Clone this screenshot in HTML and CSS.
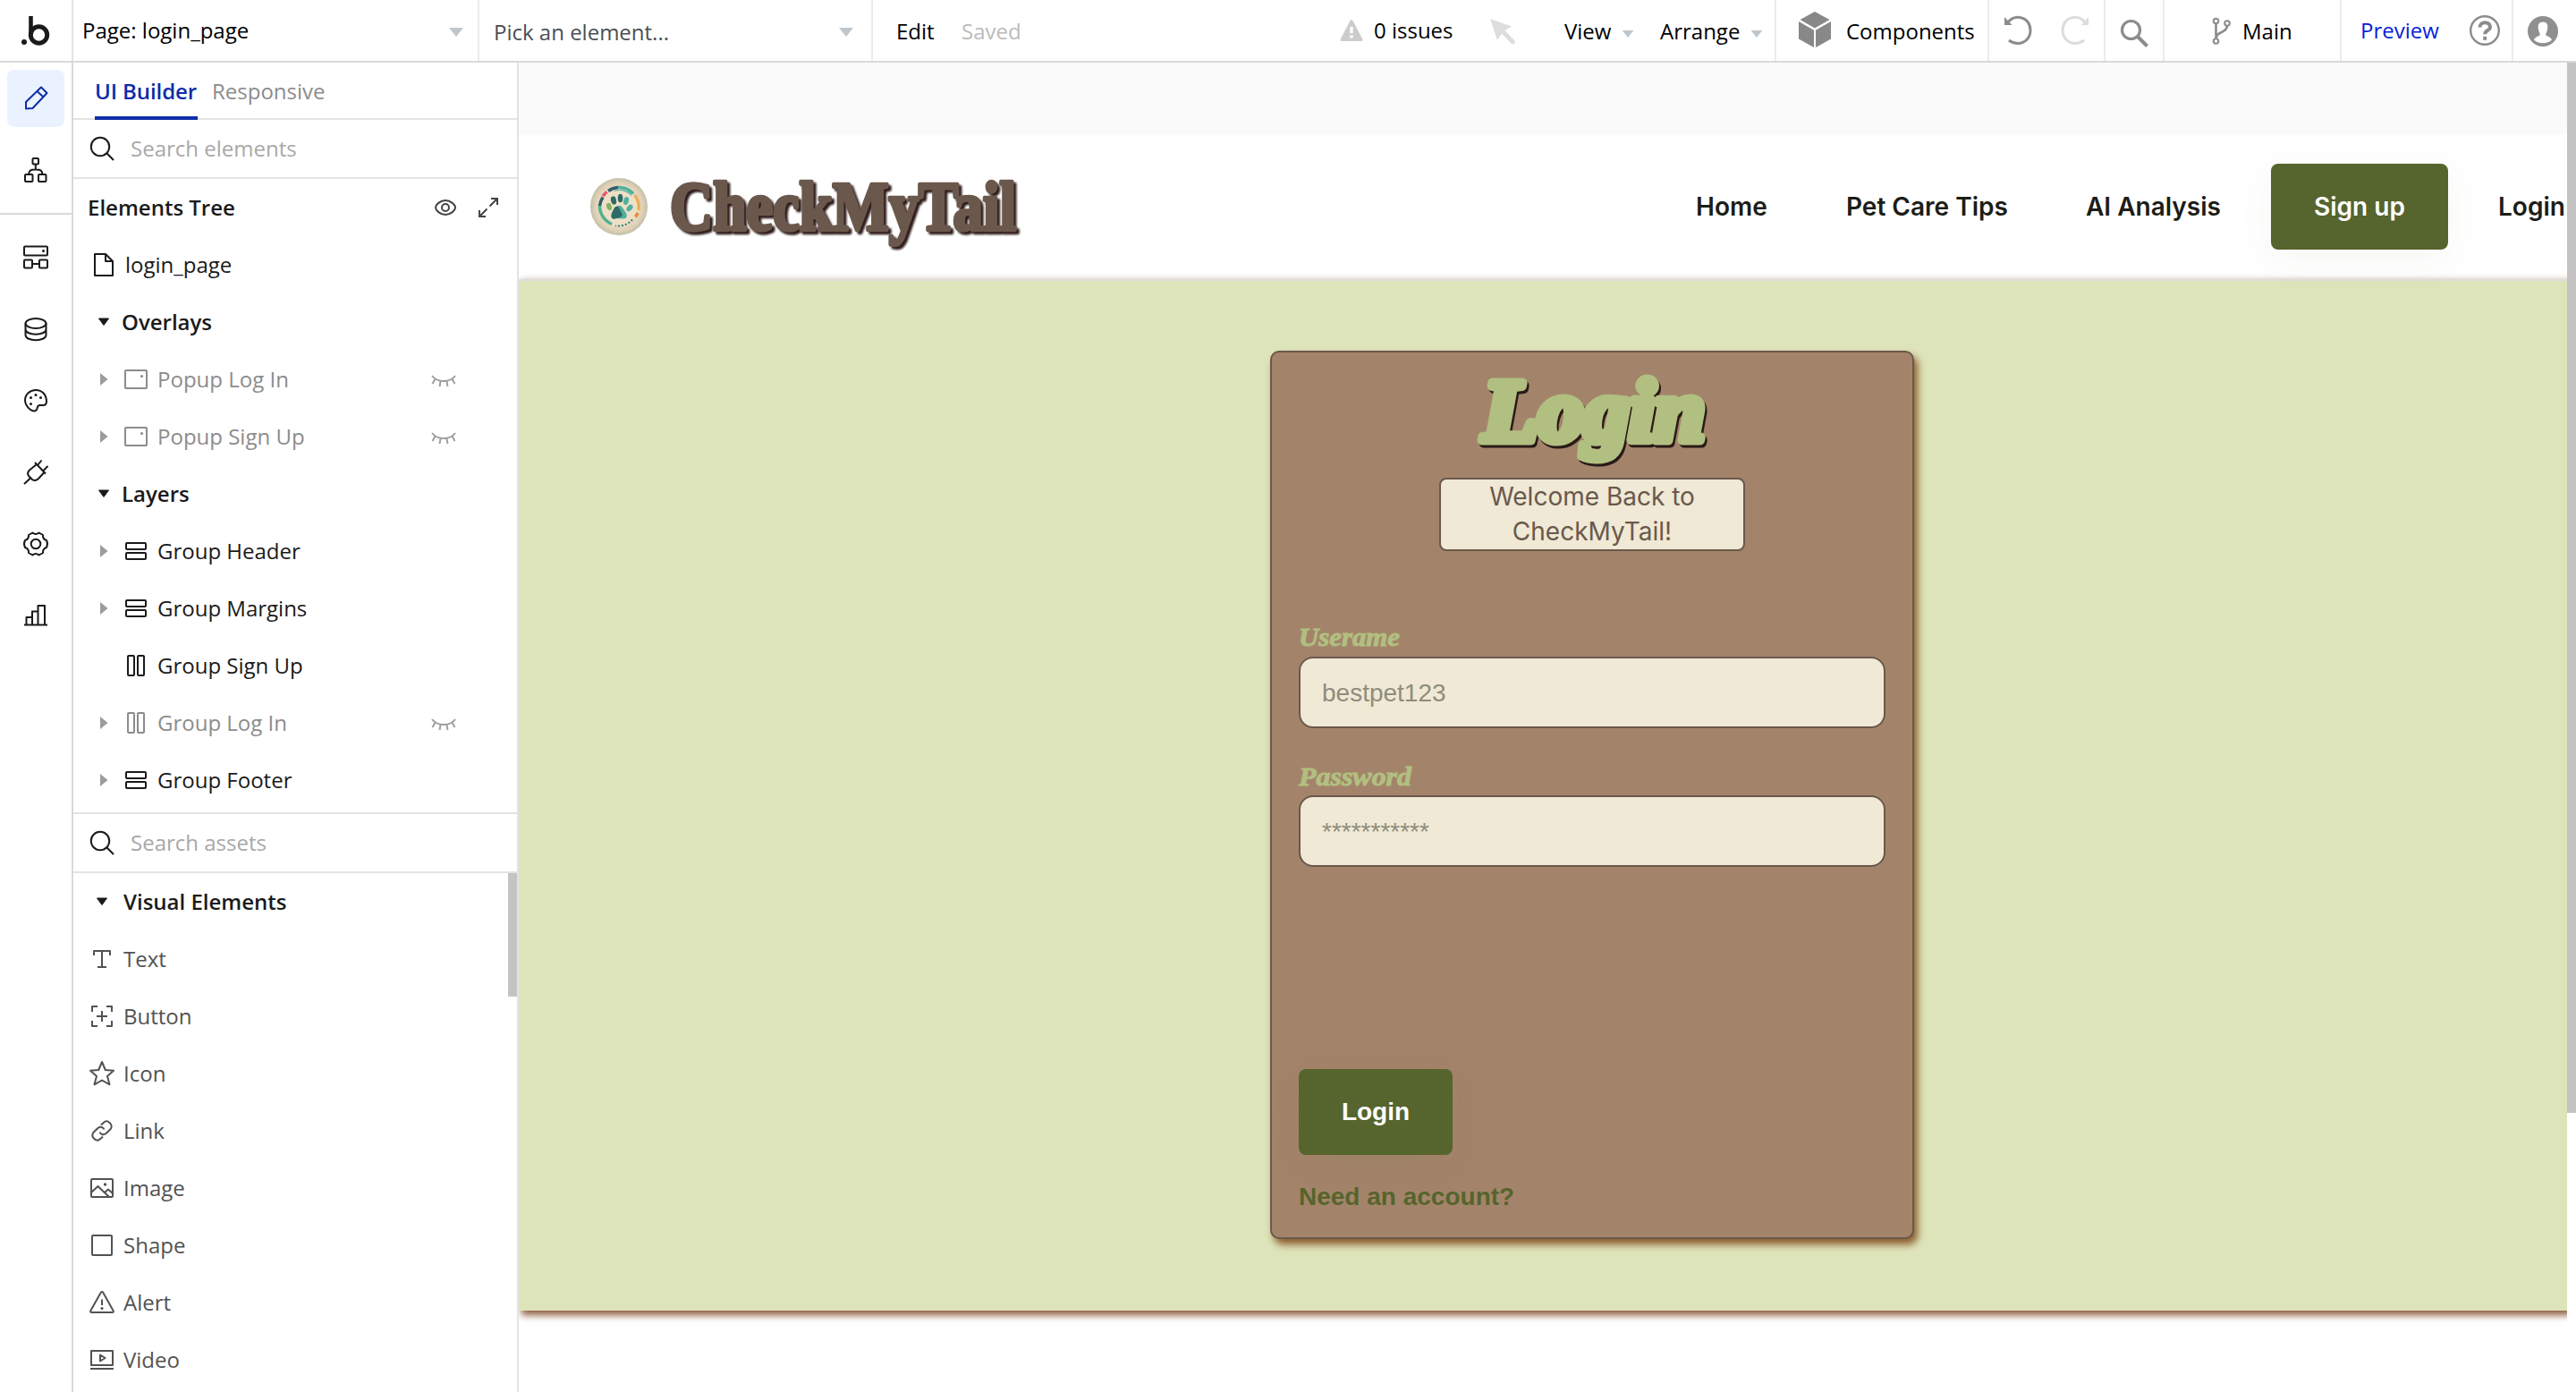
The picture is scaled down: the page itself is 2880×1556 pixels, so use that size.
FILE: index.html
```html
<!DOCTYPE html>
<html lang="en">
<head>
<meta charset="utf-8">
<title>login_page</title>
<link rel="stylesheet" href="styles.css">
</head>
<body>
<svg width="0" height="0" class="defs">
  <defs>
    <symbol id="caret" viewBox="0 0 16 10"><path d="M0 0H16L8 10Z" fill="#bfc7cd"/></symbol>
    <symbol id="search" viewBox="0 0 32 32"><g fill="none" stroke="#1a1a1a" stroke-width="2"><circle cx="14" cy="14" r="10.2"/><path d="M21.3 21.3 29 29"/></g></symbol>
    <symbol id="down" viewBox="0 0 14 10"><path d="M1.5 1H12.5L7 8.500Z" fill="#1a1a1a" stroke="#1a1a1a" stroke-linejoin="round"/></symbol>
    <symbol id="right" viewBox="0 0 10 14"><path d="M1 0V14L9.500 7Z" fill="#9c9c9c"/></symbol>
    <symbol id="popup" viewBox="0 0 32 32"><rect x="4" y="6" width="24" height="20" rx="1" fill="none" stroke="currentColor" stroke-width="2"/><circle cx="22.500" cy="12.500" r="1.600" fill="currentColor"/></symbol>
    <symbol id="rows" viewBox="0 0 32 32"><g fill="none" stroke="currentColor" stroke-width="2"><rect x="5" y="7" width="22" height="7" rx="1"/><rect x="5" y="18" width="22" height="7" rx="1"/></g></symbol>
    <symbol id="cols" viewBox="0 0 32 32"><g fill="none" stroke="currentColor" stroke-width="2"><rect x="7" y="5" width="7" height="22" rx="1"/><rect x="18" y="5" width="7" height="22" rx="1"/></g></symbol>
    <symbol id="hidden" viewBox="0 0 28 16"><path d="M1 2C7 10 21 10 27 2M4.500 5.500 1.500 11M10.500 8.500 9.500 14M17.500 8.500 18.500 14M23.500 5.500 26.500 11" fill="none" stroke="#9c9c9c" stroke-width="1.900"/></symbol>
  </defs>
</svg>

<header class="topbar">
  <div class="seg seg-logo">
    <svg width="34" height="36" viewBox="0 0 34 36"><circle cx="5" cy="31" r="3" fill="#1a1a1a"/><path d="M12.500 2V23" stroke="#1a1a1a" stroke-width="4.600"/><circle cx="21.500" cy="23" r="9.200" fill="none" stroke="#1a1a1a" stroke-width="5"/></svg>
  </div>
  <div class="seg seg-page"><span class="up">Page: login_page</span><svg class="caret"><use href="#caret"/></svg></div>
  <div class="seg seg-pick"><span>Pick an element...</span><svg class="caret"><use href="#caret"/></svg></div>
  <div class="seg seg-menu">
    <span>Edit</span><span class="muted">Saved</span>
    <svg width="28" height="28" viewBox="0 0 28 28"><path d="M14 2.500 25 23.500H3Z" fill="#ccc" stroke="#ccc" stroke-width="3" stroke-linejoin="round"/><path d="M14 9V16M14 18.500V21.500" stroke="#fff" stroke-width="3.400"/></svg>
    <span class="up">0 issues</span>
    <svg width="32" height="32" viewBox="0 0 32 32"><path d="M2 2 26 10.500 18.500 15 28.500 25.500Q31 28.500 28.500 30 26.500 31 24.500 28.500L15 18.500 10 26Z" fill="#ddd"/></svg>
    <span>View</span><svg class="caret small"><use href="#caret"/></svg>
    <span>Arrange</span><svg class="caret small"><use href="#caret"/></svg>
  </div>
  <div class="seg seg-components">
    <svg width="38" height="42" viewBox="0 0 38 42"><g fill="#888"><path d="M19 1 35.500 10 19 19.500 2.500 10Z"/><path d="M1 12 18 21.700V41L1 31.500Z"/><path d="M37 12 20 21.700V41L37 31.500Z"/></g></svg>
    <span>Components</span>
  </div>
  <div class="seg seg-undo">
    <svg width="34" height="36" viewBox="0 0 34 36"><path d="M6 9C10 4 15 3 19 3.500 27 4.500 31 11 31 18 31 26 25 32.500 17 32.500 13 32.500 9.500 31 7 29" fill="none" stroke="#8c8c8c" stroke-width="3"/><path d="M2 3V12H10.500Z" fill="#8c8c8c"/></svg>
    <svg width="34" height="36" viewBox="0 0 34 36"><path d="M28 9C24 4 19 3 15 3.500 7 4.500 3 11 3 18 3 26 9 32.500 17 32.500 21 32.500 24.500 31 27 29" fill="none" stroke="#dcdcdc" stroke-width="3"/><path d="M32 3V12H23.500Z" fill="#dcdcdc"/></svg>
  </div>
  <div class="seg seg-search">
    <svg width="34" height="34" viewBox="0 0 34 34"><circle cx="13.500" cy="13.500" r="10" fill="none" stroke="#8c8c8c" stroke-width="3.200"/><path d="M20.500 20.500 31.500 31.500" stroke="#8c8c8c" stroke-width="4"/></svg>
  </div>
  <div class="seg seg-branch">
    <svg width="22" height="32" viewBox="0 0 22 32"><g fill="none" stroke="#8c8c8c" stroke-width="2"><circle cx="4.500" cy="4.500" r="2.800"/><circle cx="4.500" cy="27" r="2.800"/><circle cx="17" cy="7" r="2.800"/><path d="M4.500 7.500V24M17 10C17 18 5 16 5 23" stroke-width="2.600"/></g></svg>
    <span>Main</span>
  </div>
  <div class="seg seg-preview">
    <span class="preview">Preview</span>
    <svg width="36" height="36" viewBox="0 0 36 36"><circle cx="18" cy="18" r="15.800" fill="none" stroke="#8c8c8c" stroke-width="2.400"/><path d="M12.500 14.500C12.500 7.500 24 7.500 24 14.200 24 18 18.200 18 18.200 22.200" fill="none" stroke="#8c8c8c" stroke-width="4"/><rect x="16.200" y="24.800" width="4" height="4" fill="#8c8c8c"/></svg>
  </div>
  <div class="seg seg-user">
    <svg width="36" height="36" viewBox="0 0 36 36"><circle cx="18" cy="18" r="17" fill="#8f8f8f"/><path d="M18 7.500C22.500 7.500 23.800 11 23.200 15 22.900 18 21.500 19.500 21.200 21.500 21 23.500 26.500 23.500 28 27.500 23 32.500 13 32.500 8 27.500 9.500 23.500 15 23.500 14.800 21.500 14.500 19.500 13.100 18 12.800 15 12.200 11 13.500 7.500 18 7.500Z" fill="#fff"/></svg>
  </div>
</header>

<div class="workspace">
  <nav class="rail">
    <div class="rail-item active"><svg viewBox="0 0 32 32"><path d="M22 3.500 28.500 10 12.500 27 5 27.500V20ZM17.500 8 24.500 14.500" class="line"/></svg></div>
    <div class="rail-item"><svg viewBox="0 0 32 32"><g class="line"><rect x="12.500" y="3" width="6.500" height="6.500" rx="1"/><rect x="4" y="21" width="8.500" height="8" rx="1"/><rect x="19" y="21" width="8.500" height="8" rx="1"/><path d="M15.800 9.500V15M8.300 21C8.300 16.500 10 15.500 15.800 15.500S23.300 16.500 23.300 21"/></g></svg></div>
    <div class="rail-divider"></div>
    <div class="rail-item"><svg viewBox="0 0 32 32"><g class="line"><rect x="3" y="3.500" width="26" height="10" rx="1"/><rect x="3" y="18.500" width="9" height="9" rx="1"/><rect x="20" y="18.500" width="9" height="9" rx="1"/><path d="M12 23H20"/></g><circle cx="24.500" cy="8.500" r="1.500" class="dot"/></svg></div>
    <div class="rail-item"><svg viewBox="0 0 32 32"><g class="line"><ellipse cx="16" cy="9.500" rx="11.500" ry="5.500"/><path d="M4.500 9.500V22.500C4.500 30 27.500 30 27.500 22.500V9.500M4.500 16C4.500 23.500 27.500 23.500 27.500 16"/></g></svg></div>
    <div class="rail-item"><svg viewBox="0 0 32 32"><path d="M16 4C23 4 28 9 28 17 28 20 26.500 21 24 21H20.500C17 21 18.500 24.500 16.500 26.500 14.500 28.500 12 27.500 9.500 25.500 6 22.500 4 19.500 4 15.500 4 9 9.500 4 16 4Z" class="line"/><g class="dot"><circle cx="10.500" cy="12.500" r="1.500"/><circle cx="16" cy="9.500" r="1.500"/><circle cx="21.500" cy="12.500" r="1.500"/><circle cx="10.500" cy="19.500" r="1.500"/></g></svg></div>
    <div class="rail-item"><svg viewBox="0 0 32 32"><path d="M15 5 27 17.500M17 7 9 13.500Q5.500 17 8.500 20.500L12 24Q15.500 26.500 19 23L25.500 16M18.500 7.500 22.500 2.500M24.500 14 29.500 9M10 22.500 3 29" class="line"/></svg></div>
    <div class="rail-item"><svg viewBox="0 0 32 32"><g class="line"><circle cx="16" cy="16" r="5.300"/><path d="M12.500 3.500Q16 6.500 19.500 3.500L24 6Q23.500 10.500 28 12Q30 16 28 20Q23.500 21.500 24 26L19.500 28.500Q16 25.500 12.500 28.500L8 26Q8.500 21.500 4 20Q2 16 4 12Q8.500 10.500 8 6Z"/></g></svg></div>
    <div class="rail-item"><svg viewBox="0 0 32 32"><path d="M3 26.500H29M5.500 26V18H12V26M12 18V11.500H18.500V26M18.500 11.500V5H26V26" class="line"/></svg></div>
  </nav>

  <aside class="panel">
    <div class="tabs"><span class="tab current">UI Builder</span><span class="tab">Responsive</span></div>
    <div class="searchbox"><svg class="ico"><use href="#search"/></svg><span>Search elements</span></div>
    <div class="tree">
      <div class="tree-title"><span class="strong">Elements Tree</span>
        <svg width="28" height="24" viewBox="0 0 28 24"><g fill="none" stroke="#444" stroke-width="2"><path d="M3 12C3 9 8 4 14 4S25 9 25 12 20 20 14 20 3 15 3 12Z"/><circle cx="14" cy="12" r="4"/></g></svg>
        <svg width="24" height="24" viewBox="0 0 24 24"><path d="M13.500 10.500 22 2M15 2H22V9M10.500 13.500 2 22M9 22H2V15" fill="none" stroke="#444" stroke-width="2"/></svg>
      </div>
      <div class="row page"><svg class="ico" viewBox="0 0 32 32"><path d="M6 4H18L26 12V28H6ZM18 4V12H26" fill="none" stroke="#1a1a1a" stroke-width="2" stroke-linejoin="round"/></svg><span>login_page</span></div>
      <div class="row section"><svg class="down"><use href="#down"/></svg><span>Overlays</span></div>
      <div class="row item dim"><svg class="right"><use href="#right"/></svg><svg class="ico"><use href="#popup"/></svg><span>Popup Log In</span><svg class="hid"><use href="#hidden"/></svg></div>
      <div class="row item dim"><svg class="right"><use href="#right"/></svg><svg class="ico"><use href="#popup"/></svg><span>Popup Sign Up</span><svg class="hid"><use href="#hidden"/></svg></div>
      <div class="row section"><svg class="down"><use href="#down"/></svg><span>Layers</span></div>
      <div class="row item"><svg class="right"><use href="#right"/></svg><svg class="ico"><use href="#rows"/></svg><span>Group Header</span></div>
      <div class="row item"><svg class="right"><use href="#right"/></svg><svg class="ico"><use href="#rows"/></svg><span>Group Margins</span></div>
      <div class="row item"><i></i><svg class="ico"><use href="#cols"/></svg><span>Group Sign Up</span></div>
      <div class="row item dim"><svg class="right"><use href="#right"/></svg><svg class="ico"><use href="#cols"/></svg><span>Group Log In</span><svg class="hid"><use href="#hidden"/></svg></div>
      <div class="row item"><svg class="right"><use href="#right"/></svg><svg class="ico"><use href="#rows"/></svg><span>Group Footer</span></div>
    </div>
    <div class="searchbox"><svg class="ico"><use href="#search"/></svg><span>Search assets</span></div>
    <div class="assets">
      <div class="asset-list">
        <div class="row heading"><svg class="down"><use href="#down"/></svg><span>Visual Elements</span></div>
        <div class="row asset"><svg viewBox="0 0 32 32"><path d="M7 12V7H25V12M16 7V25M11 25H21" class="line"/></svg><span>Text</span></div>
        <div class="row asset"><svg viewBox="0 0 32 32"><path d="M5 11V5H11M21 5H27V11M27 21V27H21M11 27H5V21M16 10V22M10 16H22" class="line"/></svg><span>Button</span></div>
        <div class="row asset"><svg viewBox="0 0 32 32"><path d="M16 3 19.800 12 29 12.800 22 19 24.500 28.300 16 23.500 7.500 28.300 10 19 3 12.800 12.200 12Z" class="line"/></svg><span>Icon</span></div>
        <div class="row asset"><svg viewBox="0 0 32 32"><path d="M15 9.500 18 6.700C22 3 29 8.500 25.700 14L20.500 19C17.500 21.300 14.500 20 13.500 17.500M17 22.500 14 25.300C10 29 3 23.500 6.300 18L11.500 13C14.500 10.700 17.500 12 18.500 14.500" class="line"/></svg><span>Link</span></div>
        <div class="row asset"><svg viewBox="0 0 32 32"><rect x="4" y="6" width="24" height="20" rx="1" class="line"/><path d="M4 21 11.500 14 24 26M19 21 23 17.500 28 22" class="line"/><circle cx="19.500" cy="12" r="1.700" class="dot"/></svg><span>Image</span></div>
        <div class="row asset"><svg viewBox="0 0 32 32"><rect x="5" y="5" width="22" height="22" rx="1" class="line"/></svg><span>Shape</span></div>
        <div class="row asset"><svg viewBox="0 0 32 32"><path d="M14.800 4.800Q16 3 17.200 4.800L28.600 25Q29.500 27 27.500 27H4.500Q2.500 27 3.400 25ZM16 12.500V19" class="line"/><circle cx="16" cy="22.500" r="1.600" class="dot"/></svg><span>Alert</span></div>
        <div class="row asset"><svg viewBox="0 0 32 32"><path d="M4 6H28V22H4ZM3 26H29M14 10.500V17.500L19.500 14Z" class="line"/></svg><span>Video</span></div>
      </div>
      <div class="asset-thumb"></div>
    </div>
  </aside>

  <main class="canvas">
    <div class="site">
      <div class="site-top"></div>
      <div class="site-header">
        <svg class="badge" viewBox="0 0 64 64">
          <defs><radialGradient id="cream"><stop offset=".6" stop-color="#eee0c6"/><stop offset=".85" stop-color="#ddd0b6"/><stop offset="1" stop-color="#c3bfa8"/></radialGradient></defs>
          <circle cx="32" cy="32" r="32" fill="url(#cream)"/>
          <g fill="none" stroke-width="3.500">
            <path d="M31 10.500A22 22 0 0 1 48 17.500" stroke="#4fb0a0"/><path d="M20 14.500A22 22 0 0 1 31 10.500" stroke="#355e68"/>
            <path d="M14 20.500A22 22 0 0 1 18.500 15.500" stroke="#e8596f"/><path d="M10.500 31A22 22 0 0 1 14 21.500" stroke="#355e68"/>
            <path d="M10.500 31A22 22 0 0 0 24 51.500" stroke="#52b08f"/><path d="M49.500 19A22 22 0 0 1 54 36" stroke="#ecb057"/><path d="M53 39A22 22 0 0 1 50.500 43.500" stroke="#e78b3f"/>
            <path d="M47 46.500A22 22 0 0 1 28 53.500" stroke="#347f72" stroke-width="2" stroke-dasharray="2 2"/>
            <path d="M27 14.500C34 12 42 14.500 46 19.500" stroke="#4fb0a0" stroke-width="1.200"/>
          </g>
          <ellipse cx="26" cy="25" rx="3" ry="4.700" fill="#2d6b66" transform="rotate(-12 26 25)"/><ellipse cx="33.500" cy="22.500" rx="2.800" ry="4.700" fill="#2d6b66"/><ellipse cx="40" cy="25.500" rx="2.900" ry="4.500" fill="#4fb0a0" transform="rotate(15 40 25.500)"/><ellipse cx="44" cy="33.500" rx="2.800" ry="4.300" fill="#4fb0a0" transform="rotate(40 44 33.500)"/><ellipse cx="21" cy="32" rx="2.800" ry="4.200" fill="#82b064" transform="rotate(-20 21 32)"/>
          <path d="M29 32Q33 29 36 33L40.500 40Q42 45 37 45.500L27 45Q22.500 43 24.500 39Z" fill="#4fb0a0"/><path d="M27 33Q30.500 30 32.500 34L36 41Q35.500 44 31 44.500L26 46Q22 44.500 24 39Z" fill="#2d6b66"/>
        </svg>
        <svg class="wordmark" width="420" height="130" viewBox="0 0 420 130"><text x="11" y="91" textLength="387" lengthAdjust="spacingAndGlyphs">CheckMyTail</text></svg>
        <nav class="site-nav"><span>Home</span><span>Pet Care Tips</span><span>AI Analysis</span><a class="btn signup">Sign up</a><span class="last">Login</span></nav>
      </div>
      <section class="hero">
        <form class="card">
          <svg class="title" width="340" height="136" viewBox="0 0 340 136"><text x="48" y="94" textLength="248" lengthAdjust="spacingAndGlyphs">Login</text></svg>
          <p class="welcome">Welcome Back to<br>CheckMyTail!</p>
          <label class="label first"><svg width="140" height="44" viewBox="0 0 140 44"><text x="0" y="32" textLength="113" lengthAdjust="spacingAndGlyphs">Userame</text></svg></label>
          <input class="field" placeholder="bestpet123">
          <label class="label second"><svg width="140" height="43" viewBox="0 0 140 43"><text x="0" y="32" textLength="126" lengthAdjust="spacingAndGlyphs">Password</text></svg></label>
          <input class="field" placeholder="***********">
          <a class="btn login">Login</a>
          <a class="need">Need an account?</a>
        </form>
      </section>
    </div>
    <div class="scroll"><div class="thumb"></div></div>
  </main>
</div>
</body>
</html>
```
FILE: styles.css
```css
* { box-sizing: border-box; }
html, body { margin: 0; height: 100%; overflow: hidden; }
body {
  display: flex;
  flex-direction: column;
  background: #fff;
  color: #1a1a1a;
  font: 24px/32px "Open Sans", "Noto Sans", sans-serif;
  white-space: nowrap;
}
svg { display: block; flex: none; overflow: visible; }
.defs { position: absolute; }
.line { fill: none; stroke: currentColor; stroke-width: 2; stroke-linejoin: round; }
.dot { fill: currentColor; }

/* Top bar */
.topbar { display: flex; flex: none; height: 70px; border-bottom: 2px solid #d9d9d9; color: #000; }
.seg { display: flex; flex: none; align-items: center; border-right: 2px solid #ebebeb; padding-top: 2px; }
.up { margin-top: -2px; }
.caret { width: 16px; height: 10px; }
.caret.small { width: 14px; height: 8px; margin-top: 5px; }
.seg-logo { width: 82px; padding: 0 0 0 22px; border-color: #dfe4ea; }
.seg-page { width: 454px; padding: 1px 16px 0 10px; justify-content: space-between; }
.seg-page .caret { margin-top: 3px; }
.seg-pick { width: 440px; padding: 4px 20px 0 16px; justify-content: space-between; color: #4a4f54; }
.seg-menu { width: 1010px; display: grid; grid-template-columns: 74px 422px 39px 128px 85px 64px 43px 101px 20px; padding-left: 25px; }
.seg-menu > :first-child { margin-left: 1px; }
.muted { color: #bbb; }
.seg-components { width: 238px; padding-left: 24px; gap: 16px; }
.seg-components svg { margin-top: -4px; }
.seg-undo { width: 130px; padding: 0 0 0 15px; gap: 30px; }
.seg-search { width: 66px; padding: 5px 0 0 15px; }
.seg-branch { width: 198px; padding-left: 53px; gap: 12px; }
.seg-preview { width: 192px; padding: 0 0 0 21px; }
.preview { width: 121px; color: #0a1fd6; }
.seg-user { border: 0; padding: 1px 0 0 15px; }

.workspace { display: flex; flex: 1; min-height: 0; }

/* Icon rail */
.rail { width: 82px; flex: none; border-right: 2px solid #d9d9d9; display: flex; flex-direction: column; gap: 16px; padding-top: 8px; }
.rail-item { width: 64px; height: 64px; margin-left: 8px; flex: none; display: grid; place-items: center; border-radius: 8px; }
.rail-item svg { width: 32px; height: 32px; }
.active { background: #ebf2ff; color: #0f2da8; }
.rail-divider { height: 2px; background: #d9d9d9; flex: none; }

/* Side panel */
.panel { width: 498px; flex: none; border-right: 2px solid #e3e3e3; display: flex; flex-direction: column; }
.ico { width: 32px; height: 32px; }
.tabs { height: 64px; flex: none; display: flex; gap: 16px; padding-left: 24px; border-bottom: 2px solid #e3e3e3; }
.tab { height: 64px; line-height: 64px; color: #8c8c8c; }
.current { width: 115px; color: #0f2da8; font-weight: 600; letter-spacing: -.1px; border-bottom: 4px solid #0f2da8; }
.searchbox { height: 66px; flex: none; display: flex; align-items: center; gap: 16px; padding-left: 16px; border-bottom: 2px solid #e3e3e3; color: #a8a8a8; }
.tree { height: 710px; flex: none; border-bottom: 2px solid #e3e3e3; }
.tree-title, .row { display: flex; align-items: center; height: 64px; }
.tree-title { padding-left: 16px; }
.strong { width: 386px; font-weight: 600; }
.tree-title svg + svg { margin-left: 22px; }
.page { padding-left: 18px; gap: 8px; }
.section { padding-left: 27px; gap: 13px; font-weight: 600; }
.down { width: 14px; height: 10px; }
.item { padding-left: 29px; }
.item .right, .item i { width: 10px; height: 14px; margin-right: 15px; }
.item span { margin-left: 8px; flex: 1; }
.hid { width: 28px; height: 16px; margin-right: 68px; margin-top: 4px; }
.dim { color: #8c8c8c; }
.heading { padding-left: 25px; gap: 17px; font-weight: 600; }
.assets { flex: 1; display: flex; min-height: 0; overflow: hidden; }
.asset-list { flex: 1; }
.asset { color: #525252; padding-left: 16px; gap: 8px; }
.asset svg { width: 32px; height: 32px; }
.asset-thumb { width: 10px; height: 138px; background: #c4c4c4; }

/* Page being edited */
.canvas { flex: 1; display: flex; min-width: 0; }
.site { width: 2290px; overflow: hidden; font-family: Inter, sans-serif; }
.site-top { height: 80px; background: #fafafa; }
.site-header { height: 162px; display: flex; align-items: center; padding-left: 80px; background: #fff; }
.badge { width: 64px; height: 64px; }
.wordmark { margin-left: 14px; }
.wordmark text {
  font: bold 78px "Liberation Serif", serif;
  fill: #6b584c;
  stroke: #6b584c;
  stroke-width: 4.5;
  stroke-linejoin: round;
  filter: drop-shadow(3px 3px 1px #2f1c1c);
}
.site-nav { margin-left: 738px; display: grid; grid-template-columns: 168px 268px 207px 198px 78px; align-items: center; font-size: 28px; font-weight: 600; color: #1c1d17; }
.site-nav span { margin-top: -1px; }
.site-nav .last { padding-left: 56px; }
.btn { display: flex; align-items: center; justify-content: center; height: 96px; border-radius: 8px; background: #56642d; color: #fff; box-shadow: 0 10px 40px rgba(86, 100, 45, .06); }
.signup { padding-bottom: 1px; }
.hero { height: 1153px; background: #dee4ba; border-top: 2px solid #dedede; padding: 78px 0 0 840px; box-shadow: 4px 4px 8px 1px #8b5a3b; }
.card { width: 720px; height: 993px; padding: 0 30px; display: flex; flex-direction: column; background: #a3846a; border: 2px solid #6b584c; border-radius: 10px; box-shadow: 4px 6px 8px #8a5a2c; }
.title { align-self: center; margin-top: 4px; }
.title text {
  font: italic bold 97px "Liberation Serif", serif;
  fill: #b1bf80;
  stroke: #b1bf80;
  stroke-width: 11;
  stroke-linejoin: round;
  filter: drop-shadow(2px 3px 0 #2a1a18);
}
.welcome { align-self: center; width: 342px; height: 82px; margin: 0; border: 2px solid #6b584c; border-radius: 8px; background: #efe9d5; color: #6b584c; font-size: 28px; line-height: 39px; text-align: center; }
.label { display: block; flex: none; }
.label text { font: italic bold 30px "Liberation Serif", serif; fill: #b1bf80; stroke: #b1bf80; stroke-width: 1; }
.first { margin-top: 74px; }
.second { margin-top: 32px; }
.field { width: 656px; height: 80px; flex: none; border: 2px solid #6b584c; border-radius: 16px; background: #efe9d5; padding: 2px 24px 0; font: 28px "Liberation Sans", sans-serif; }
.field::placeholder { color: #8f8c7c; opacity: 1; }
.login { width: 172px; margin-top: 226px; font: bold 28px "Liberation Sans", sans-serif; flex: none; }
.need { margin-top: 27px; font: bold 28px/40px "Liberation Sans", sans-serif; color: #56642d; }
.scroll { width: 10px; background: #fff; position: relative; z-index: 1; }
.thumb { height: 1174px; background: #c4c4c4; }
```
